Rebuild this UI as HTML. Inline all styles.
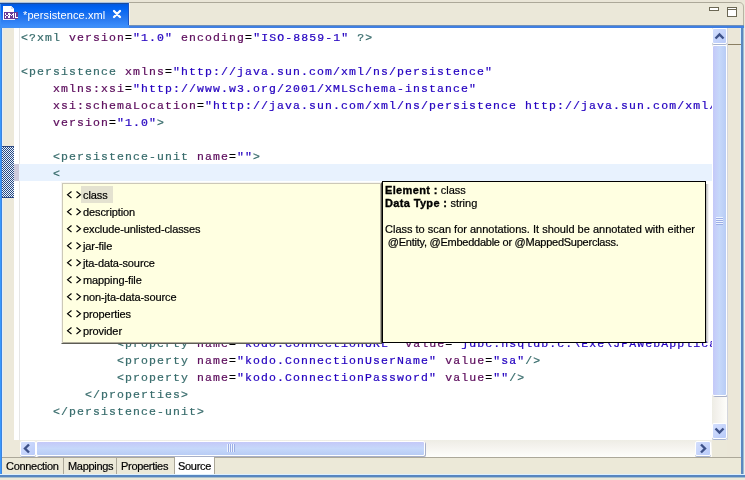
<!DOCTYPE html>
<html><head><meta charset="utf-8">
<style>
*{margin:0;padding:0;box-sizing:border-box}
html,body{width:745px;height:480px;overflow:hidden;background:#EBE8D9;position:relative;font-family:"Liberation Sans",sans-serif}
.a{position:absolute}
#toplight{left:0;top:0;width:745px;height:2px;background:#EAE6D8}
#topline{left:129px;top:2px;width:610px;height:1px;background:#ACA899}
#tab{left:0;top:2px;width:129px;height:26px;border-top:1px solid #A8C0E0;background:linear-gradient(#1A4C9C 0,#1A4C9C 1px,#0558DE 1px,#0062F2 20%,#2A7AF0 65%,#3A8CFA 90%,#4290F4)}
#tabtxt{left:23px;top:9px;font-size:11px;color:#fff;white-space:pre;letter-spacing:0.1px;will-change:transform}
#bluetop{left:129px;top:25px;width:615px;height:3px;background:linear-gradient(#7090B8 0,#7090B8 1px,#3F7FE2 1px)}
#bleft{left:0;top:28px;width:3px;height:450px;background:linear-gradient(90deg,#3A98FC 0,#3A98FC 1px,#3C84E0 1px,#3C84E0 2px,#E2EEFC 2px)}
#bright{left:740px;top:28px;width:5px;height:450px;background:linear-gradient(90deg,#D8F0FF 0,#D8F0FF 1px,#5A88C0 1px,#5A88C0 3px,#A0BCD0 3px,#A0BCD0 4px,#E8EEEE 4px)}
#bbot{left:0;top:474px;width:745px;height:4px;background:linear-gradient(#DDF0FF 0,#DDF0FF 1px,#5886C0 1px,#5886C0 3px,#A8C0CC 3px)}
#gutter{left:3px;top:28px;width:17px;height:429px;background:#EDE9DA}

#editor{left:14px;top:28px;width:699px;height:412px;background:#fff;overflow:hidden}
#gsep{left:19px;top:28px;width:1px;height:412px;background:#E6E6E6}
#curline{left:19px;top:164px;width:694px;height:17px;background:#E8F2FE}
#curg{left:14px;top:164px;width:5px;height:17px;background:#CDCADC}
#checker{left:2px;top:146px;width:12px;height:52px;border-top:1px solid #2B4780;border-bottom:1px solid #2B4780;
 background-color:#E6F4FF;background-image:linear-gradient(45deg,#2B4780 25%,transparent 25%,transparent 75%,#2B4780 75%),linear-gradient(45deg,#2B4780 25%,transparent 25%,transparent 75%,#2B4780 75%);background-size:2px 2px;background-position:0 0,1px 1px}
#code{left:21px;top:29px;will-change:transform;font-family:"Liberation Mono",monospace;font-size:11.5px;letter-spacing:1.1px;-webkit-text-stroke:0.22px;line-height:17px;white-space:pre;width:691px;overflow:hidden}
.t{color:#386C6C}.n{color:#5C0C5C}.v{color:#2400C0}
#vscroll{left:712px;top:28px;width:15px;height:412px;background:linear-gradient(90deg,#EEEDE5,#F3F1EC 30%,#FEFEFB)}
#ruler{left:727px;top:28px;width:13px;height:429px;background:#EBE7D8}
#rulerline{left:728px;top:44px;width:13px;height:1px;background:#8A7F62}
#hscroll{left:20px;top:440px;width:692px;height:17px;background:linear-gradient(#EEEDE5,#F3F1EC 30%,#FEFEFB)}
.sb{border:1px solid #fff;border-radius:2px;background:linear-gradient(135deg,#D3DEFD,#B9CBF9);box-shadow:0 1px 0 #A8B4D0}
.th{border:1px solid #fff;border-radius:2px;background:#C2D3FC;box-shadow:1px 1px 0 #A8B0C8}
#tabbar{left:2px;top:457px;width:739px;height:17px;background:#ECE9D8;border-top:1px solid #ACA899}
.btab{top:458px;height:16px;font-size:11px;color:#000;white-space:pre;padding-top:2px;letter-spacing:-0.3px;will-change:transform;-webkit-text-stroke:0.2px}
.sep{top:458px;width:1px;height:16px;background:#ACA899}
#list{left:61px;top:182px;width:321px;height:162px;background:#FFFFE1;border:1px solid;border-color:#F6F6F2 #505048 #5C5C54 #F6F6F2;box-shadow:inset 1px 1px 0 #CCC8B8,inset -1px -1px 0 #B0AC9C}
.li{left:21px;height:17px;font-size:11px;white-space:pre;line-height:17px;will-change:transform;margin-top:1px;letter-spacing:-0.1px;-webkit-text-stroke:0.2px}
.ic{left:5px;width:14px;height:17px}
#sel{left:19px;top:3px;width:32px;height:17px;background:#E4E2D0}
#info{left:382px;top:181px;width:324px;height:162px;background:#FFFFE1;border:1px solid #000}
#info div{font-size:11px;line-height:13px;white-space:pre;will-change:transform;-webkit-text-stroke:0.2px}
#info b{letter-spacing:0.35px;-webkit-text-stroke:0.35px}
</style></head><body>
<div class="a" id="toplight"></div>
<div class="a" id="topline"></div>
<svg class="a" style="left:737px;top:2px" width="8" height="24"><path d="M0 0.5 H2 Q6.5 0.5 6.5 5 V24" fill="none" stroke="#B8B4A4"/></svg>
<div class="a" id="tab"></div>
<svg class="a" style="left:0;top:0" width="20" height="22" shape-rendering="crispEdges">
 <path d="M3 6 H11 L14 9 V12 H3 Z" fill="#fff"/>
 <path d="M11 6 V9 H14 Z" fill="#D8DCF0"/>
 <rect x="3" y="12" width="1" height="8" fill="#fff"/>
 <rect x="4" y="19" width="11" height="1" fill="#F0F0FF"/>
 <rect x="4" y="12" width="14" height="7" fill="#6A3A96"/>
 <g fill="#fff"><rect x="5" y="13" width="1" height="1"/><rect x="8" y="13" width="1" height="1"/><rect x="5" y="14" width="1" height="1"/><rect x="8" y="14" width="1" height="1"/><rect x="6" y="15" width="1" height="1"/><rect x="7" y="15" width="1" height="1"/><rect x="5" y="16" width="1" height="1"/><rect x="8" y="16" width="1" height="1"/><rect x="5" y="17" width="1" height="1"/><rect x="8" y="17" width="1" height="1"/><rect x="9" y="13" width="1" height="1"/><rect x="13" y="13" width="1" height="1"/><rect x="9" y="14" width="1" height="1"/><rect x="10" y="14" width="1" height="1"/><rect x="12" y="14" width="1" height="1"/><rect x="13" y="14" width="1" height="1"/><rect x="9" y="15" width="1" height="1"/><rect x="11" y="15" width="1" height="1"/><rect x="13" y="15" width="1" height="1"/><rect x="9" y="16" width="1" height="1"/><rect x="13" y="16" width="1" height="1"/><rect x="9" y="17" width="1" height="1"/><rect x="13" y="17" width="1" height="1"/><rect x="15" y="13" width="1" height="1"/><rect x="15" y="14" width="1" height="1"/><rect x="15" y="15" width="1" height="1"/><rect x="15" y="16" width="1" height="1"/><rect x="15" y="17" width="1" height="1"/><rect x="16" y="17" width="1" height="1"/><rect x="17" y="17" width="1" height="1"/></g>
</svg>
<div class="a" style="left:0;top:4px;width:1px;height:24px;background:#3A8CF4"></div>
<div class="a" style="left:128px;top:3px;width:1px;height:22px;background:#1E56C4"></div>
<div class="a" style="left:129px;top:3px;width:1px;height:22px;background:#F6F4EC"></div>
<div class="a" id="tabtxt">*persistence.xml</div>
<svg class="a" style="left:112px;top:9px" width="10" height="10"><path d="M2 2 L8 8 M8 2 L2 8" stroke="#fff" stroke-width="2.3" stroke-linecap="round"/></svg>
<div class="a" style="left:709px;top:7px;width:10px;height:4px;border:1px solid #6B6754;background:#fff"></div>
<div class="a" style="left:727px;top:7px;width:10px;height:10px;border:1px solid #6B6754;background:#fff;border-top-color:#6B6754"></div><div class="a" style="left:728px;top:9px;width:8px;height:1px;background:#6B6754"></div>
<div class="a" id="bluetop"></div>
<div class="a" id="bleft"></div>
<div class="a" id="bright"></div>
<div class="a" id="bbot"></div>
<div class="a" id="gutter"></div>
<div class="a" id="gw"></div>
<div class="a" id="editor"></div>
<div class="a" id="gsep"></div>
<div class="a" id="curline"></div>
<div class="a" id="curg"></div>
<div class="a" id="checker"></div>
<div class="a" id="code"><span class="t">&lt;?xml</span> <span class="n">version</span>=<span class="v">"1.0"</span> <span class="n">encoding</span>=<span class="v">"ISO-8859-1"</span> <span class="t">?&gt;</span>

<span class="t">&lt;persistence</span> <span class="n">xmlns</span>=<span class="v">"http://java.sun.com/xml/ns/persistence"</span>
    <span class="n">xmlns:xsi</span>=<span class="v">"http://www.w3.org/2001/XMLSchema-instance"</span>
    <span class="n">xsi:schemaLocation</span>=<span class="v">"http://java.sun.com/xml/ns/persistence http://java.sun.com/xml/ns/persistence/persistence_1_0.xsd"</span>
    <span class="n">version</span>=<span class="v">"1.0"</span><span class="t">&gt;</span>

    <span class="t">&lt;persistence-unit</span> <span class="n">name</span>=<span class="v">""</span><span class="t">&gt;</span>
    <span class="t">&lt;</span>









            <span class="t">&lt;property</span> <span class="n">name</span>=<span class="v">"kodo.ConnectionURL"</span> <span class="n">value</span>=<span class="v">"jdbc:hsqldb:c:\Exe\JPAWebApplication\db"</span><span class="t">/&gt;</span>
            <span class="t">&lt;property</span> <span class="n">name</span>=<span class="v">"kodo.ConnectionUserName"</span> <span class="n">value</span>=<span class="v">"sa"</span><span class="t">/&gt;</span>
            <span class="t">&lt;property</span> <span class="n">name</span>=<span class="v">"kodo.ConnectionPassword"</span> <span class="n">value</span>=<span class="v">""</span><span class="t">/&gt;</span>
        <span class="t">&lt;/properties&gt;</span>
    <span class="t">&lt;/persistence-unit&gt;</span>
</div>
<div class="a" id="vscroll"></div>
<div class="a sb" style="left:712px;top:28px;width:15px;height:16px"></div>
<svg class="a" style="left:714px;top:32px" width="11" height="8"><path d="M1.5 6.5 L5.5 2.5 L9.5 6.5" stroke="#3D5189" stroke-width="2.4" fill="none"/></svg>
<div class="a th" style="left:712px;top:45px;width:15px;height:351px;background:linear-gradient(90deg,#C4C8F8,#C6D8FA 50%,#B8CCF5)"></div>
<svg class="a" style="left:716px;top:217px" width="8" height="8"><path d="M0 1.5H7M0 3.5H7M0 5.5H7M0 7.5H7" stroke="#9CAEE6" stroke-width="1"/><path d="M0 0.5H7M0 2.5H7M0 4.5H7M0 6.5H7" stroke="#EEF4FF" stroke-width="1"/></svg>
<div class="a sb" style="left:712px;top:423px;width:15px;height:16px"></div>
<svg class="a" style="left:714px;top:427px" width="11" height="8"><path d="M1.5 1.5 L5.5 5.5 L9.5 1.5" stroke="#3D5189" stroke-width="2.4" fill="none"/></svg>
<div class="a" id="ruler"></div>
<div class="a" id="rulerline"></div>
<div class="a" style="left:727px;top:28px;width:1px;height:412px;background:#D4D6DC"></div>
<div class="a" id="hscroll"></div>
<div class="a sb" style="left:20px;top:441px;width:16px;height:15px"></div>
<svg class="a" style="left:23px;top:443px" width="8" height="11"><path d="M6 1.5 L2 5.5 L6 9.5" stroke="#3D5189" stroke-width="2.4" fill="none"/></svg>
<div class="a th" style="left:36px;top:441px;width:389px;height:15px;background:linear-gradient(#C4C8F8,#C6D8FA 50%,#B8CCF5)"></div>
<svg class="a" style="left:227px;top:444px" width="8" height="8"><path d="M0.5 0V8M2.5 0V8M4.5 0V8M6.5 0V8" stroke="#EEF4FF" stroke-width="1"/><path d="M1.5 0V8M3.5 0V8M5.5 0V8M7.5 0V8" stroke="#9CAEE6" stroke-width="1"/></svg>
<div class="a sb" style="left:695px;top:441px;width:16px;height:15px"></div>
<svg class="a" style="left:699px;top:443px" width="8" height="11"><path d="M2 1.5 L6 5.5 L2 9.5" stroke="#3D5189" stroke-width="2.4" fill="none"/></svg>
<div class="a" id="tabbar"></div>
<div class="a btab" style="left:6px">Connection</div>
<div class="a sep" style="left:63px"></div>
<div class="a btab" style="left:68px">Mappings</div>
<div class="a sep" style="left:116px"></div>
<div class="a btab" style="left:121px">Properties</div>
<div class="a sep" style="left:174px"></div>
<div class="a" style="left:175px;top:457px;width:40px;height:17px;background:#fff;border-right:1px solid #ACA899"></div>
<div class="a btab" style="left:178px">Source</div>
<div class="a" id="list">
<div class="a" id="sel"></div>
<svg class="a" style="left:4px;top:8px" width="16" height="8"><path d="M5.5 0.5 L1.5 3.75 L5.5 7 M10.5 0.5 L14.5 3.75 L10.5 7" stroke="#000" stroke-width="1.1" fill="none"/></svg>
<div class="a li" style="top:3px">class</div>
<svg class="a" style="left:4px;top:25px" width="16" height="8"><path d="M5.5 0.5 L1.5 3.75 L5.5 7 M10.5 0.5 L14.5 3.75 L10.5 7" stroke="#000" stroke-width="1.1" fill="none"/></svg>
<div class="a li" style="top:20px">description</div>
<svg class="a" style="left:4px;top:42px" width="16" height="8"><path d="M5.5 0.5 L1.5 3.75 L5.5 7 M10.5 0.5 L14.5 3.75 L10.5 7" stroke="#000" stroke-width="1.1" fill="none"/></svg>
<div class="a li" style="top:37px">exclude-unlisted-classes</div>
<svg class="a" style="left:4px;top:59px" width="16" height="8"><path d="M5.5 0.5 L1.5 3.75 L5.5 7 M10.5 0.5 L14.5 3.75 L10.5 7" stroke="#000" stroke-width="1.1" fill="none"/></svg>
<div class="a li" style="top:54px">jar-file</div>
<svg class="a" style="left:4px;top:76px" width="16" height="8"><path d="M5.5 0.5 L1.5 3.75 L5.5 7 M10.5 0.5 L14.5 3.75 L10.5 7" stroke="#000" stroke-width="1.1" fill="none"/></svg>
<div class="a li" style="top:71px">jta-data-source</div>
<svg class="a" style="left:4px;top:93px" width="16" height="8"><path d="M5.5 0.5 L1.5 3.75 L5.5 7 M10.5 0.5 L14.5 3.75 L10.5 7" stroke="#000" stroke-width="1.1" fill="none"/></svg>
<div class="a li" style="top:88px">mapping-file</div>
<svg class="a" style="left:4px;top:110px" width="16" height="8"><path d="M5.5 0.5 L1.5 3.75 L5.5 7 M10.5 0.5 L14.5 3.75 L10.5 7" stroke="#000" stroke-width="1.1" fill="none"/></svg>
<div class="a li" style="top:105px">non-jta-data-source</div>
<svg class="a" style="left:4px;top:127px" width="16" height="8"><path d="M5.5 0.5 L1.5 3.75 L5.5 7 M10.5 0.5 L14.5 3.75 L10.5 7" stroke="#000" stroke-width="1.1" fill="none"/></svg>
<div class="a li" style="top:122px">properties</div>
<svg class="a" style="left:4px;top:144px" width="16" height="8"><path d="M5.5 0.5 L1.5 3.75 L5.5 7 M10.5 0.5 L14.5 3.75 L10.5 7" stroke="#000" stroke-width="1.1" fill="none"/></svg>
<div class="a li" style="top:139px">provider</div>
</div>
<div class="a" style="left:706px;top:184px;width:3px;height:159px;background:linear-gradient(90deg,rgba(0,0,0,0.3),rgba(0,0,0,0))"></div>
<div class="a" id="info">
<div class="a" style="left:2px;top:2px"><b>Element :</b> class</div>
<div class="a" style="left:2px;top:15px"><b>Data Type :</b> string</div>
<div class="a" style="left:2px;top:41px">Class to scan for annotations. It should be annotated with either</div>
<div class="a" style="left:2px;top:54px;letter-spacing:-0.25px"> @Entity, @Embeddable or @MappedSuperclass.</div>
</div>
</body></html>
